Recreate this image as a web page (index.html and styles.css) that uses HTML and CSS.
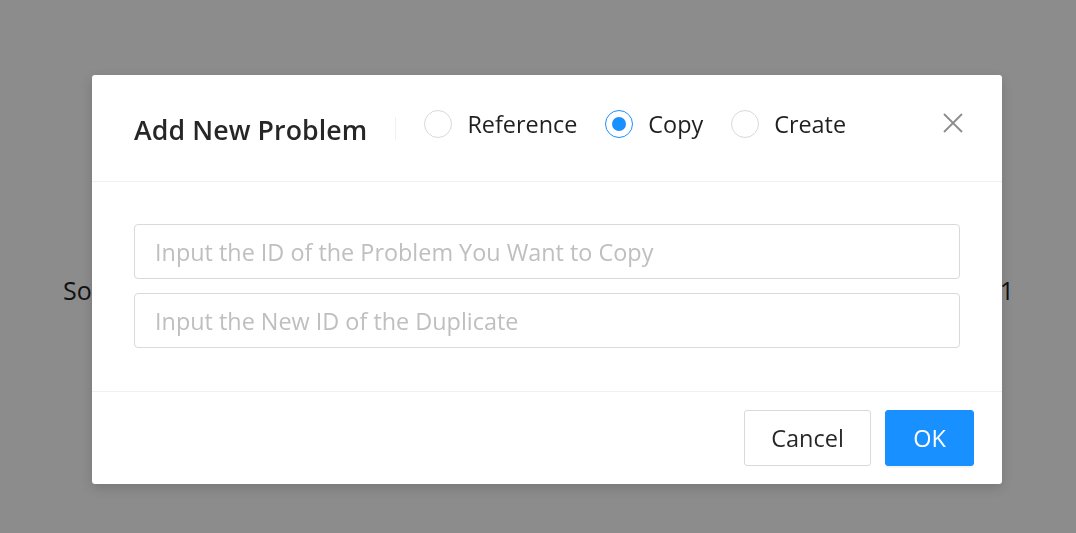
FILE: index.html
```html
<!DOCTYPE html>
<html>
<head>
<meta charset="utf-8">
<link rel="stylesheet" href="styles.css">
</head>
<body>
<div class="page">
  <div class="page-row">
    <span class="page-left">Solution</span>
    <span class="page-right">1</span>
  </div>
</div>
<div class="mask"></div>
<div class="modal">
  <div class="modal-header">
    <div class="modal-title">Add New Problem</div>
    <div class="divider"></div>
    <div class="radio-group">
      <label class="radio"><span class="radio-circle"></span><span class="radio-label">Reference</span></label>
      <label class="radio"><span class="radio-circle checked"></span><span class="radio-label">Copy</span></label>
      <label class="radio"><span class="radio-circle"></span><span class="radio-label">Create</span></label>
    </div>
    <button class="close" aria-label="Close">
      <svg width="20" height="20" viewBox="0 0 20 20"><path d="M1 1 L19 19 M19 1 L1 19" stroke="#8c8c8c" stroke-width="1.8" fill="none"/></svg>
    </button>
  </div>
  <div class="modal-body">
    <input class="field" placeholder="Input the ID of the Problem You Want to Copy">
    <input class="field" placeholder="Input the New ID of the Duplicate">
  </div>
  <div class="modal-footer">
    <button class="btn">Cancel</button>
    <button class="btn btn-primary">OK</button>
  </div>
</div>
</body>
</html>
```

FILE: styles.css
```css
* { box-sizing: border-box; }
html, body { margin: 0; padding: 0; }
body {
  width: 1076px;
  height: 533px;
  overflow: hidden;
  background: #fff;
  font-family: "Open Sans", "Noto Sans", sans-serif;
  color: rgba(0,0,0,0.85);
}
.page { padding-top: 273px; }
.page-row {
  display: flex;
  justify-content: space-between;
  padding: 0 62px 0 63px;
  font-size: 25px;
  color: #1f1f1f;
}
.mask {
  position: fixed;
  inset: 0;
  background: rgba(0,0,0,0.45);
}
.modal {
  position: absolute;
  left: 92px;
  top: 75px;
  width: 910px;
  height: 409px;
  background: #fff;
  border-radius: 3px;
  display: flex;
  flex-direction: column;
  box-shadow: 0 4px 12px rgba(0,0,0,0.15);
}
.modal-header {
  height: 107px;
  flex: none;
  border-bottom: 1px solid #f0f0f0;
  display: flex;
  align-items: center;
  padding: 0 39px 0 42px;
}
.modal-title {
  font-size: 26.7px;
  font-weight: 600;
  color: rgba(0,0,0,0.85);
  letter-spacing: 0.1px;
  margin-top: 2px;
}
.divider {
  width: 1px;
  height: 23px;
  background: #f0f0f0;
  margin: 0 28px 0 28px;
}
.radio-group {
  display: flex;
  align-items: center;
  gap: 28px;
  margin-bottom: 9px;
}
.radio {
  display: flex;
  align-items: center;
  gap: 15px;
}
.radio-circle {
  width: 28px;
  height: 28px;
  border: 1px solid #d9d9d9;
  border-radius: 50%;
  position: relative;
  background: #fff;
}
.radio-circle.checked { border-color: #1890ff; }
.radio-circle.checked::after {
  content: "";
  position: absolute;
  left: 6px;
  top: 6px;
  width: 14px;
  height: 14px;
  border-radius: 50%;
  background: #1890ff;
}
.radio-label {
  font-size: 23.4px;
  color: rgba(0,0,0,0.88);
}
.close {
  margin-left: auto;
  margin-bottom: 10px;
  border: 0;
  background: none;
  padding: 0;
  width: 20px;
  height: 20px;
  display: flex;
}
.modal-body {
  flex: 1;
  padding: 42px 42px 0 42px;
  display: flex;
  flex-direction: column;
  gap: 14px;
  border-bottom: 1px solid #f0f0f0;
}
.field {
  width: 826px;
  height: 55px;
  flex: none;
  border: 1px solid #d9d9d9;
  border-radius: 4px;
  padding: 0 20px;
  font-family: inherit;
  font-size: 23.4px;
  color: rgba(0,0,0,0.85);
  outline: none;
}
.field::placeholder { color: #bfbfbf; }
.modal-footer {
  height: 92px;
  flex: none;
  display: flex;
  justify-content: flex-end;
  align-items: flex-start;
  gap: 14px;
  padding: 18px 28px 0 0;
}
.btn {
  height: 56px;
  width: 127px;
  padding: 0;
  border: 1px solid #d9d9d9;
  border-radius: 3px;
  background: #fff;
  font-family: inherit;
  font-size: 23.5px;
  color: rgba(0,0,0,0.85);
}
.btn-primary {
  background: #1890ff;
  border-color: #1890ff;
  color: #fff;
  width: 89px;
  box-shadow: 0 2px 0 rgba(0,0,0,0.045);
}
```
